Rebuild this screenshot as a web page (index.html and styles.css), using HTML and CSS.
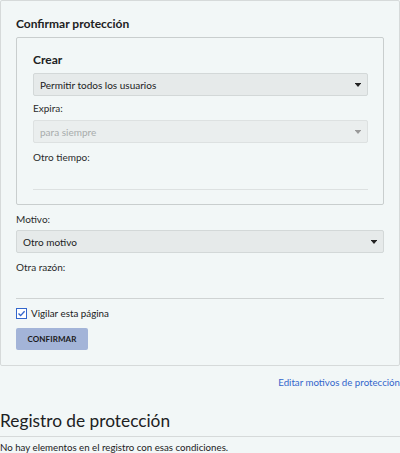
FILE: index.html
```html
<!DOCTYPE html>
<html lang="es">
<head>
<meta charset="utf-8">
<link rel="stylesheet" href="styles.css">
</head>
<body>
<form class="outer">
  <div class="legend">Confirmar protección</div>
  <div class="inner">
    <div class="inner-title">Crear</div>
    <div class="select">
      <span>Permitir todos los usuarios</span>
      <svg class="arrow" width="6" height="4" viewBox="0 0 6 4"><rect x="0" y="0" width="6" height="1" fill="#222"/><path d="M0.5 1 L5.5 1 L3 4 Z" fill="#222"/></svg>
    </div>
    <label class="lbl lbl-expira">Expira:</label>
    <div class="select disabled">
      <span>para siempre</span>
      <svg class="arrow" width="6" height="4" viewBox="0 0 6 4"><rect x="0" y="0" width="6" height="1" fill="#999"/><path d="M0.5 1 L5.5 1 L3 4 Z" fill="#999"/></svg>
    </div>
    <label class="lbl lbl-otro">Otro tiempo:</label>
    <div class="line inner-line"></div>
  </div>
  <label class="lbl lbl-motivo">Motivo:</label>
  <div class="select">
    <span>Otro motivo</span>
    <svg class="arrow" width="6" height="4" viewBox="0 0 6 4"><rect x="0" y="0" width="6" height="1" fill="#222"/><path d="M0.5 1 L5.5 1 L3 4 Z" fill="#222"/></svg>
  </div>
  <label class="lbl lbl-razon">Otra razón:</label>
  <div class="line outer-line"></div>
  <div class="check-row">
    <span class="checkbox">
      <svg width="9" height="9" viewBox="0 0 9 9"><path d="M1.5 4.6 L3.6 6.6 L7.6 2.2" fill="none" stroke="#3366cc" stroke-width="1.4"/></svg>
    </span>
    <span>Vigilar esta página</span>
  </div>
  <div class="btn">CONFIRMAR</div>
</form>
<div class="edit-link"><a href="#">Editar motivos de protección</a></div>
<h2 class="log-title">Registro de protección</h2>
<p class="log-empty">No hay elementos en el registro con esas condiciones.</p>
</body>
</html>
```
FILE: styles.css
```css
html, body {
  margin: 0;
  padding: 0;
  background: #f2f7f7;
}
body {
  font-family: "Lato", "Liberation Sans", sans-serif;
  color: #202122;
  font-size: 10px;
}
.outer {
  margin: 0;
  border: 1px solid #d6dada;
  border-radius: 2px;
  padding: 15px 15px 15px 15px;
  height: 334px;
  box-sizing: content-box;
  width: 368px;
}
.legend {
  font-weight: 700;
  font-size: 12px;
  line-height: 14px;
  margin-top: 1px;
}
.inner {
  margin-top: 6px;
  border: 1px solid #c9cece;
  border-radius: 2px;
  padding: 14px 15px 15px 16px;
  height: 137px;
}
.inner-title {
  font-weight: 700;
  font-size: 12px;
  line-height: 16px;
  margin-bottom: 5px;
}
.select {
  height: 21px;
  border: 1px solid #d3d8d8;
  background: #e6eaea;
  border-radius: 2px;
  display: flex;
  align-items: center;
  justify-content: space-between;
  padding: 0 6px 0 6px;
  color: #202122;
  font-size: 10px;
}
.select.disabled {
  color: #a8acac;
  background: #eaeeee;
  border-color: #dde1e1;
}
.arrow { display: block; }
.lbl {
  display: block;
  font-size: 10px;
  line-height: 13px;
  color: #2a2b2c;
}
.lbl-expira { margin-top: 6px; margin-bottom: 5px; }
.lbl-otro { margin-top: 8px; }
.line {
  height: 1px;
  background: #dde1e1;
}
.inner-line { margin-top: 25px; }
.lbl-motivo { margin-top: 8px; margin-bottom: 4px; }
.lbl-razon { margin-top: 8px; }
.outer-line { margin-top: 24px; background: #cfd3d3; }
.check-row {
  display: flex;
  align-items: center;
  gap: 4px;
  margin-top: 8px;
  font-size: 9.8px;
  line-height: 13px;
}
.checkbox {
  width: 9px;
  height: 9px;
  border: 1px solid #3366cc;
  background: #fff;
  display: flex;
  align-items: center;
  justify-content: center;
}
.btn {
  margin-top: 8px;
  width: 72px;
  height: 22px;
  background: #a3b4d8;
  border-radius: 2px;
  display: flex;
  align-items: center;
  justify-content: center;
  font-size: 8px;
  font-weight: 700;
  color: #1a1a1a;
  letter-spacing: 0.1px;
}
.edit-link {
  text-align: right;
  margin-top: 10px;
  font-size: 9.7px;
  line-height: 13px;
}
.edit-link a {
  color: #3366cc;
  text-decoration: none;
}
.log-title {
  font-size: 17.3px;
  font-weight: 400;
  margin: 21px 0 0 0;
  line-height: 22px;
  padding-bottom: 4px;
  border-bottom: 1px solid #d6dada;
  color: #202122;
}
.log-empty {
  margin: 4px 0 0 0;
  font-size: 9.7px;
  line-height: 12px;
}
```
